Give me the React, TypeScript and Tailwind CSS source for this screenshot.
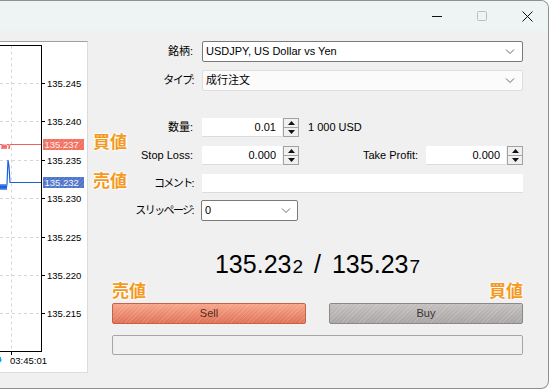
import React from 'react'

function Chevron() {
  return (
    <svg width="10" height="6" viewBox="0 0 10 6">
      <path d="M1 0.5l4 4 4-4" fill="none" stroke="#6b6b6b" strokeWidth="1" />
    </svg>
  )
}

function Spinner() {
  return (
    <div className="ml-px flex h-[19px] w-[16px] flex-col border border-[#a3a3a3] bg-[#f0f0f0]">
      <div className="flex flex-1 items-center justify-center border-b border-[#a3a3a3]">
        <svg width="7" height="4" viewBox="0 0 7 4">
          <path d="M0 4h7L3.5 0z" fill="#111" />
        </svg>
      </div>
      <div className="flex flex-1 items-center justify-center">
        <svg width="7" height="4" viewBox="0 0 7 4">
          <path d="M0 0h7L3.5 4z" fill="#111" />
        </svg>
      </div>
    </div>
  )
}

function NumInput({ value }: { value: string }) {
  return (
    <div className="flex h-[19px] w-[80px] items-center justify-end border-b border-[#dcdcdc] bg-white pr-[6px] text-[11px]">
      {value}
    </div>
  )
}

function Label({ children, kana }: { children: React.ReactNode; kana?: boolean }) {
  return (
    <div className={'w-[106px] pr-[1px] text-right text-[11px] ' + (kana ? 'tracking-[-1.6px]' : '')}>
      {children}
    </div>
  )
}

function Tag({ text, className }: { text: string; className: string }) {
  return (
    <div
      className={
        'absolute text-[17px] leading-none font-bold text-[#f39a1e] [text-shadow:0_0_2px_#fff,0_0_2px_#fff,0_0_3px_#fff,0_0_3px_#fff] ' +
        className
      }
    >
      {text}
    </div>
  )
}

const grid = [
  { y: 41, label: '135.245' },
  { y: 79, label: '135.240' },
  { y: 118, label: '135.235' },
  { y: 156, label: '135.230' },
  { y: 195, label: '135.225' },
  { y: 233, label: '135.220' },
  { y: 271, label: '135.215' },
]

function Chart() {
  return (
    <div className="h-[332px] w-[88px] shrink-0 border-t border-r border-b border-t-[#a0a0a0] border-r-[#dcdcdc] border-b-[#dcdcdc] bg-white">
      <svg width="87" height="330" viewBox="0 0 87 330" fontFamily="Liberation Sans, sans-serif" fontSize="9.5">
        <defs>
          <pattern id="st" width="3" height="3" patternUnits="userSpaceOnUse" patternTransform="rotate(45)">
            <rect width="1" height="3" fill="rgba(255,255,255,0.18)" />
          </pattern>
        </defs>
        {grid.map((g) => (
          <g key={g.label}>
            <line x1="0" y1={g.y + 0.5} x2="41" y2={g.y + 0.5} stroke="#d6d6d6" strokeDasharray="3 3" />
            <line x1="41" y1={g.y + 0.5} x2="45" y2={g.y + 0.5} stroke="#000" />
            <text x="47" y={g.y + 4} fill="#000">
              {g.label}
            </text>
          </g>
        ))}
        <line x1="11.5" y1="3.5" x2="11.5" y2="309" stroke="#d6d6d6" strokeDasharray="3 3" />
        <line x1="11.5" y1="309" x2="11.5" y2="313" stroke="#000" />
        <line x1="0" y1="3.5" x2="41.5" y2="3.5" stroke="#000" />
        <line x1="41.5" y1="3" x2="41.5" y2="310" stroke="#000" />
        <line x1="0" y1="309.5" x2="41.5" y2="309.5" stroke="#000" />
        <polyline
          points="0,102.5 2,102.5 2,107 3,102.5 4,107 5,102.5 6,107 7,102.5 9,102.5 9,107 10,102.5 41,102.5"
          fill="none"
          stroke="#f25f5f"
          strokeWidth="1"
        />
        <polyline
          points="0,148 1,142 2,148 3,142 4,148 5,142 6,148 7,142 8,118 9,124 10,140.5 41,140.5"
          fill="none"
          stroke="#1a5fe0"
          strokeWidth="1.2"
        />
        <rect x="43" y="97" width="41" height="11" fill="#f26d5e" />
        <rect x="43" y="97" width="41" height="11" fill="url(#st)" />
        <text x="44.5" y="106" fill="#fff0ea">
          135.237
        </text>
        <rect x="43" y="135" width="41" height="11" fill="#4a72c8" />
        <rect x="43" y="135" width="41" height="11" fill="url(#st)" />
        <text x="44.5" y="144" fill="#f4f4ff">
          135.232
        </text>
        <path d="M0.5 315v5M0 318h2" stroke="#00b0e0" strokeWidth="1" />
        <text x="10" y="322" fill="#000">
          03:45:01
        </text>
      </svg>
    </div>
  )
}

export default function App() {
  return (
    <div className='relative h-[390px] w-[550px] overflow-hidden bg-white font-["Liberation_Sans","Noto_Sans_CJK_JP",sans-serif] text-black'>
      <div className="flex h-[389px] w-[549px] flex-col overflow-hidden rounded-tr-[8px] rounded-br-[8px] border-t border-r border-b border-[#8f8f8f] bg-[#f0f0f0]">
        <div className="flex h-[30px] shrink-0 items-center justify-end bg-[#eef4f4] pr-[15px]">
          <svg width="10" height="10" viewBox="0 0 10 10" className="mr-[35px]">
            <line x1="0" y1="5.5" x2="10" y2="5.5" stroke="#111" />
          </svg>
          <svg width="10" height="10" viewBox="0 0 10 10" className="mr-[35px]">
            <rect x="0.5" y="0.5" width="9" height="9" rx="1" fill="none" stroke="#bdbdbd" />
          </svg>
          <svg width="11" height="11" viewBox="0 0 11 11">
            <path d="M0.5 0.5l10 10M10.5 0.5l-10 10" stroke="#111" strokeWidth="1" />
          </svg>
        </div>

        <div className="flex pt-[10px]">
          <Chart />

          <div className="flex-1 pr-[25px]">
            <div className="flex h-[21px] items-center">
              <Label>銘柄:</Label>
              <div className="ml-[8px] flex h-[21px] flex-1 items-center justify-between rounded-[2px] border border-[#7a7a7a] bg-white pr-[7px] pl-[3px] text-[11px]">
                <span>USDJPY, US Dollar vs Yen</span>
                <Chevron />
              </div>
            </div>

            <div className="mt-[8px] flex h-[21px] items-center">
              <Label kana>タイプ:</Label>
              <div className="ml-[8px] flex h-[21px] flex-1 items-center justify-between rounded-[2px] border border-[#dedede] bg-[#fbfbfb] pr-[7px] pl-[3px] text-[11px]">
                <span>成行注文</span>
                <Chevron />
              </div>
            </div>

            <div className="mt-[27px] flex h-[19px] items-center">
              <Label>数量:</Label>
              <div className="ml-[8px] flex items-center">
                <NumInput value="0.01" />
                <Spinner />
                <span className="ml-[9px] text-[11px]">1 000 USD</span>
              </div>
            </div>

            <div className="mt-[9px] flex h-[19px] items-center">
              <Label>Stop Loss:</Label>
              <div className="ml-[8px] flex items-center">
                <NumInput value="0.000" />
                <Spinner />
              </div>
              <div className="flex flex-1 items-center justify-end">
                <span className="mr-[8px] text-[11px]">Take Profit:</span>
                <NumInput value="0.000" />
                <Spinner />
              </div>
            </div>

            <div className="mt-[9px] flex h-[19px] items-center">
              <Label kana>コメント:</Label>
              <div className="ml-[8px] h-[19px] flex-1 border-b border-[#dcdcdc] bg-white" />
            </div>

            <div className="mt-[7px] flex h-[21px] items-center">
              <Label kana>スリッページ:</Label>
              <div className="ml-[7px] flex h-[21px] w-[97px] items-center justify-between rounded-[2px] border border-[#7a7a7a] bg-white pr-[6px] pl-[3px] text-[11px]">
                <span>0</span>
                <Chevron />
              </div>
            </div>

            <div className="pl-[24px]">
              <div className="mt-[28px] flex h-[30px] items-baseline justify-center text-[25px] leading-[30px]">
                <span>135.23</span>
                <span className="ml-[1px] text-[19px]">2</span>
                <span className="px-[11px]">/</span>
                <span>135.23</span>
                <span className="ml-[1px] text-[19px]">7</span>
              </div>

              <div className="mt-[24px] flex justify-between">
                <div className="flex h-[21px] w-[194px] items-center justify-center rounded-[2px] border border-[#c4624a] bg-[image:repeating-linear-gradient(135deg,rgba(255,255,255,0.12)_0px,rgba(255,255,255,0.12)_1px,transparent_1px,transparent_3px),linear-gradient(#f7a68a,#df7257)] text-[11px] text-[#5a2a1c]">
                  Sell
                </div>
                <div className="flex h-[21px] w-[194px] items-center justify-center rounded-[2px] border border-[#8c8888] bg-[image:repeating-linear-gradient(135deg,rgba(255,255,255,0.14)_0px,rgba(255,255,255,0.14)_1px,transparent_1px,transparent_3px),linear-gradient(#c4c0c0,#a9a5a5)] text-[11px] text-[#3c3434]">
                  Buy
                </div>
              </div>

              <div className="mt-[11px] h-[20px] rounded-[2px] border border-[#a6a6a6] bg-[#f0f0f0]" />
            </div>
          </div>
        </div>
      </div>

      <Tag text="買値" className="top-[134px] left-[93px]" />
      <Tag text="売値" className="top-[173px] left-[93px]" />
      <Tag text="売値" className="top-[283px] left-[112px]" />
      <Tag text="買値" className="top-[283px] left-[489px]" />
    </div>
  )
}
